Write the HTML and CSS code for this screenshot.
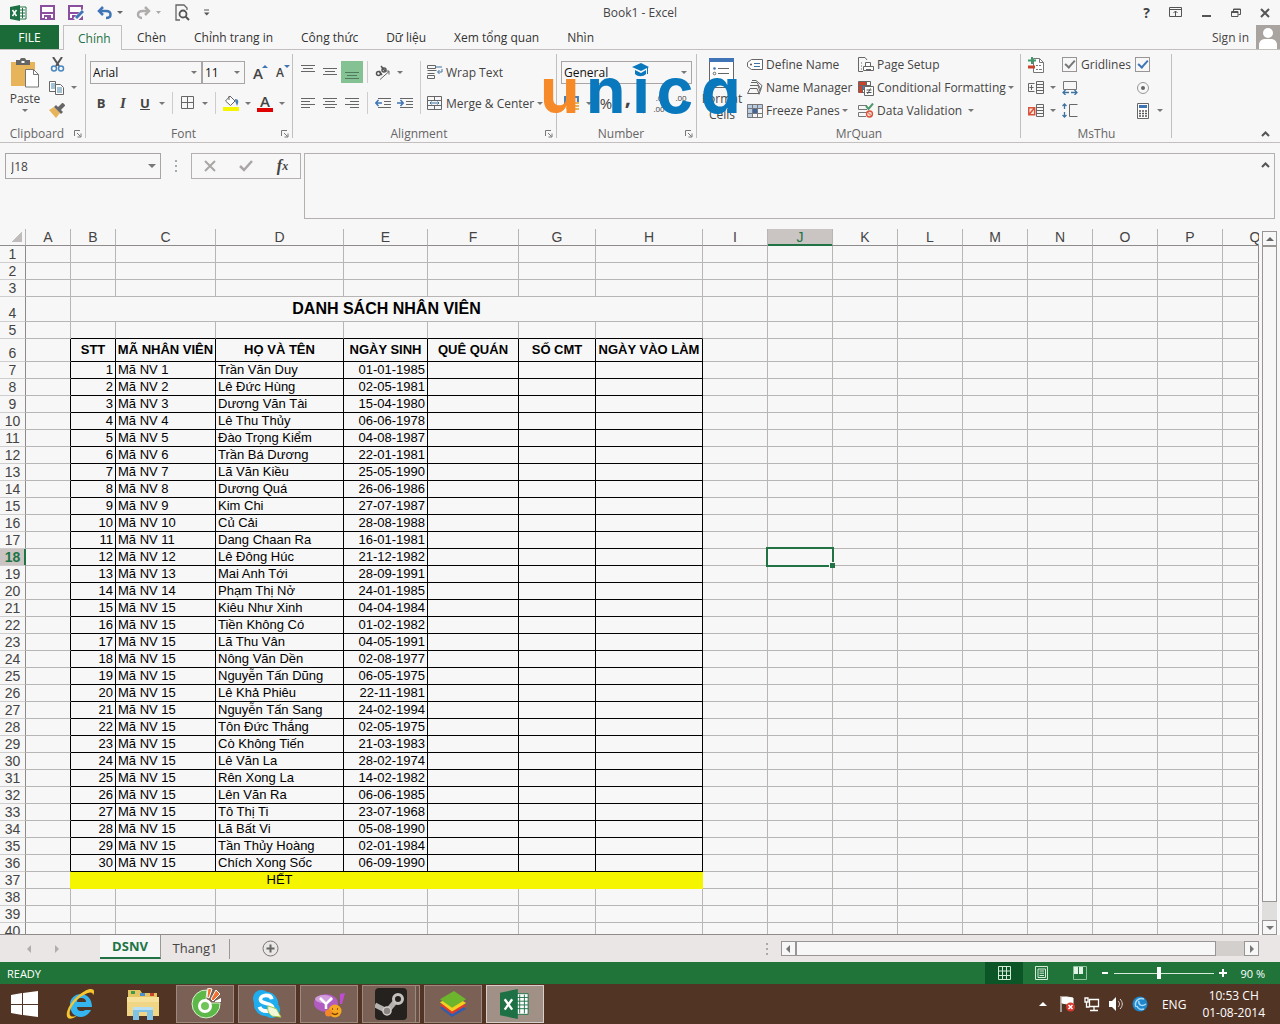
FILE: index.html
```html
<!DOCTYPE html>
<html lang="vi">
<head>
  <meta charset="UTF-8">
  <meta name="viewport" content="width=device-width, initial-scale=1.0">
  <title>Book1 - Excel</title>
  <link rel="stylesheet" href="styles.css">
</head>
<body>
  <header class="titlebar">
    <div class="quick-access">
      <svg width="17" height="16" viewBox="0 0 17 16"><path d="M9 2h7v12H9z" fill="#fff" stroke="#1e7145"/><path d="M10 5h5M10 8h5M10 11h5M12.5 3v10" stroke="#1e7145"/><path d="M0 2l10-2v16L0 14z" fill="#1e7145"/><path d="M2.500 5l4 6M6.500 5l-4 6" stroke="#fff" stroke-width="1.500"/></svg>
      <button class="icon-btn" aria-label="Save"><svg width="15" height="15" viewBox="0 0 15 15"><path d="M1 1h13v13H1z" fill="#fff" stroke="#8a4f9e" stroke-width="2"/><path d="M2 8h11" stroke="#8a4f9e" stroke-width="2"/><path d="M4 10h7v4H4z" fill="#8a4f9e"/><path d="M5 12h2v2H5z" fill="#fff"/></svg></button>
      <button class="icon-btn" aria-label="Save As"><svg width="16" height="15" viewBox="0 0 16 15"><path d="M1 1h13v13H1z" fill="#fff" stroke="#8a4f9e" stroke-width="2"/><path d="M2 8h11" stroke="#8a4f9e" stroke-width="2"/><path d="M4 10h5v4H4z" fill="#8a4f9e"/><path d="M16 6l-9 9" stroke="#f8f7f7" stroke-width="5"/><path d="M15 6l-7 7" stroke="#3f74b7" stroke-width="3"/></svg></button>
      <button class="icon-btn" aria-label="Undo"><svg width="26" height="14" viewBox="0 0 26 14"><path d="M2 5h7c6 0 6 7 0 7" fill="none" stroke="#3f74b7" stroke-width="2.500"/><path d="M6 1L2 5l4 4" fill="none" stroke="#3f74b7" stroke-width="2.500"/><path d="M20 5h6l-3 3z" fill="#666"/></svg></button>
      <button class="icon-btn" aria-label="Redo"><svg width="26" height="14" viewBox="0 0 26 14"><path d="M13 5H7c-7 0-6 7-1 7" fill="none" stroke="#b0acac" stroke-width="2.500"/><path d="M9 1l4 4-4 4" fill="none" stroke="#b0acac" stroke-width="2.500"/><path d="M20 5h5l-2.500 3z" fill="#aaa"/></svg></button>
      <button class="icon-btn" aria-label="Print Preview"><svg width="15" height="17" viewBox="0 0 15 17"><path d="M12 6V4L9 1H1v15h4" fill="none" stroke="#666" stroke-width="1.300"/><circle cx="8" cy="10" r="3.500" fill="none" stroke="#555" stroke-width="1.800"/><path d="M10.500 12.500L14 16" stroke="#555" stroke-width="2"/></svg></button>
      <button class="icon-btn" aria-label="Customize"><svg width="7" height="7" viewBox="0 0 7 7"><path d="M1 1h5" stroke="#555"/><path d="M1 3.500h5.500L3.700 6.500z" fill="#555"/></svg></button>
    </div>
    <h1 class="window-title">Book1 - Excel</h1>
    <div class="window-buttons">
      <button class="icon-btn help" aria-label="Help">?</button>
      <button class="icon-btn" aria-label="Ribbon Options"><svg width="14" height="11" viewBox="0 0 14 11"><path d="M.5.5h12v9H.5zM1 2.500h11M6.500 9V4M4.500 6l2-2 2 2" fill="none" stroke="#555"/></svg></button>
      <button class="icon-btn" aria-label="Minimize"><svg width="10" height="10" viewBox="0 0 10 10"><path d="M0 8h9" stroke="#555" stroke-width="2"/></svg></button>
      <button class="icon-btn" aria-label="Restore"><svg width="10" height="10" viewBox="0 0 10 10"><path d="M.5 3.500h6.500v5H.5zM.5 4.500h6.500M2.500 3V1h7v5.500H7.500M2.500 1.500h7" fill="none" stroke="#555"/></svg></button>
      <button class="icon-btn" aria-label="Close"><svg width="10" height="10" viewBox="0 0 10 10"><path d="M1 1l8 8M9 1L1 9" stroke="#555" stroke-width="2"/></svg></button>
    </div>
  </header>

  <nav class="tabs">
    <button class="tab tab-file">FILE</button>
    <button class="tab active">Chính</button>
    <button class="tab">Chèn</button>
    <button class="tab">Chỉnh trang in</button>
    <button class="tab">Công thức</button>
    <button class="tab">Dữ liệu</button>
    <button class="tab">Xem tổng quan</button>
    <button class="tab">Nhìn</button>
    <a class="sign-in" href="#">Sign in
      <svg width="24" height="24" viewBox="0 0 24 24"><path d="M0 0h24v24H0z" fill="#a9a4a0"/><circle cx="12" cy="8" r="5" fill="#fff"/><path d="M3 24v-4c0-4 3-6 6-6h6c3 0 6 2 6 6v4z" fill="#fff"/></svg>
    </a>
  </nav>

  <section class="ribbon">
    <div class="group group-clipboard">
      <div class="group-body">
        <button class="big-btn">
          <svg width="29" height="31" viewBox="0 0 29 31"><path d="M0 4h24v24H0z" fill="#e8b45a"/><path d="M5 2h4c0-3 6-3 6 0h4v5H5z" fill="#666"/><path d="M10.500 3h3v2h-3z" fill="#fff"/><path d="M14.500 11.500h8l5 5v12.500h-13z" fill="#fff" stroke="#777"/><path d="M22.500 11.500v5h5" fill="none" stroke="#777"/></svg>
          <span>Paste</span>
          <i class="caret"></i>
        </button>
        <div class="stack three">
          <div class="row"><button class="tool" aria-label="Cut"><svg width="15" height="15" viewBox="0 0 15 15"><path d="M3 0l6 9M12 0L6 9" stroke="#555" stroke-width="2"/><circle cx="4" cy="11.500" r="2.500" fill="none" stroke="#4a87c0" stroke-width="1.500"/><circle cx="11" cy="11.500" r="2.500" fill="none" stroke="#4a87c0" stroke-width="1.500"/></svg></button></div>
          <div class="row"><button class="tool" aria-label="Copy"><svg width="16" height="14" viewBox="0 0 16 14"><path d="M.5.500h6v10h-6z" fill="#fff" stroke="#666"/><path d="M2 3h4M2 5h4M2 7h4" stroke="#4a87a8"/><path d="M6.500 3.500h5l3 3v7h-8z" fill="#fff" stroke="#666"/><path d="M8 7h5M8 9h5M8 11h5" stroke="#4a87a8"/></svg></button><i class="caret"></i></div>
          <div class="row"><button class="tool" aria-label="Format Painter"><svg width="16" height="15" viewBox="0 0 16 15"><path d="M0 7l5-3 6 6-4 5z" fill="#e8b45a"/><path d="M5 4l7 7 2-2-7-7z" fill="#666"/><path d="M10 6l5-5" stroke="#666" stroke-width="4"/></svg></button></div>
        </div>
      </div>
      <div class="group-label">Clipboard<svg class="launcher" width="8" height="8" viewBox="0 0 8 8"><path d="M.5 6V.5H6M3 3l3.500 3.500M7 3.500V7H3.500" fill="none" stroke="#777"/></svg></div>
    </div>

    <div class="group group-font">
      <div class="group-body">
        <div class="stack two">
          <div class="row">
            <div class="combo combo-font"><select aria-label="Font"><option>Arial</option></select></div>
            <div class="combo combo-size"><select aria-label="Font size"><option>11</option></select></div>
            <button class="tool grow-font" aria-label="Increase font">A<i class="tri-up"></i></button>
            <button class="tool shrink-font" aria-label="Decrease font">A<i class="tri-down"></i></button>
          </div>
          <div class="row">
            <button class="tool"><b>B</b></button>
            <button class="tool"><b class="italic">I</b></button>
            <button class="tool"><b class="underline">U</b></button><i class="caret"></i>
            <i class="sep"></i>
            <button class="tool" aria-label="Borders"><svg width="14" height="14" viewBox="0 0 14 14"><path d="M.5.500h12v12H.5zM6.500.500v12M.5 6.500h12" fill="none" stroke="#666"/></svg></button><i class="caret"></i>
            <i class="sep"></i>
            <button class="tool" aria-label="Fill color"><svg width="17" height="16" viewBox="0 0 17 16"><path d="M7 1l5 5-4.500 4.500-5-4.500z" fill="#fff" stroke="#666"/><path d="M6 5V1" stroke="#666"/><path d="M12 4c4 0 4 3 2 7-1-3-2-4-2-7z" fill="#4a80b8"/><path d="M0 12h16v4H0z" fill="#f5f500"/></svg></button><i class="caret"></i>
            <button class="tool font-color" aria-label="Font color">A</button><i class="caret"></i>
          </div>
        </div>
      </div>
      <div class="group-label">Font<svg class="launcher" width="8" height="8" viewBox="0 0 8 8"><path d="M.5 6V.5H6M3 3l3.500 3.500M7 3.500V7H3.500" fill="none" stroke="#777"/></svg></div>
    </div>

    <div class="group group-align">
      <div class="group-body">
        <div class="stack two align-left">
          <div class="row">
            <button class="tool" aria-label="Top Align"><svg width="14" height="14" viewBox="0 0 14 14"><path d="M0 .5h14M2 3.500h10M0 6.500h14" stroke="#666"/></svg></button>
            <button class="tool" aria-label="Middle Align"><svg width="14" height="14" viewBox="0 0 14 14"><path d="M0 3.500h14M2 6.500h10M0 9.500h14" stroke="#666"/></svg></button>
            <button class="tool pressed" aria-label="Bottom Align"><svg width="14" height="14" viewBox="0 0 14 14"><path d="M0 7.500h14M2 10.500h10M0 13.500h14" stroke="#4f7a5d"/></svg></button>
            <i class="sep"></i>
            <button class="tool" aria-label="Orientation"><svg width="16" height="15" viewBox="0 0 16 15"><g fill="none" stroke="#555" stroke-width="1.500"><circle cx="3.500" cy="8.500" r="2"/><path d="M4 6l3 4M6 1l4 5"/><circle cx="9" cy="5" r="2"/></g><path d="M5 14.500l9-8M10.500 6H14v3.500" stroke="#666" fill="none"/></svg></button><i class="caret"></i>
          </div>
          <div class="row">
            <button class="tool" aria-label="Align Left"><svg width="14" height="12" viewBox="0 0 14 12"><path d="M0 1.500h14M0 4.500h9M0 7.500h14M0 10.500h9" stroke="#666"/></svg></button>
            <button class="tool" aria-label="Center"><svg width="14" height="12" viewBox="0 0 14 12"><path d="M0 1.500h14M2 4.500h10M0 7.500h14M2 10.500h10" stroke="#666"/></svg></button>
            <button class="tool" aria-label="Align Right"><svg width="14" height="12" viewBox="0 0 14 12"><path d="M0 1.500h14M5 4.500h9M0 7.500h14M5 10.500h9" stroke="#666"/></svg></button>
            <i class="sep"></i>
            <button class="tool" aria-label="Decrease Indent"><svg width="16" height="12" viewBox="0 0 16 12"><path d="M3 1.500h13M9 4.500h7M9 7.500h7M3 10.500h13" stroke="#666"/><path d="M1 6h6M3.500 3L.8 6l2.700 3" fill="none" stroke="#3f74b7" stroke-width="1.500"/></svg></button>
            <button class="tool" aria-label="Increase Indent"><svg width="16" height="12" viewBox="0 0 16 12"><path d="M3 1.500h13M9 4.500h7M9 7.500h7M3 10.500h13" stroke="#666"/><path d="M0 6h6M3.500 3l2.700 3-2.700 3" fill="none" stroke="#3f74b7" stroke-width="1.500"/></svg></button>
          </div>
        </div>
        <div class="stack two align-right">
          <div class="row"><button class="cmd"><svg width="16" height="16" viewBox="0 0 16 16"><path d="M.5 1.500h8v3h-8zM.5 6.500h9M.5 9.500h7M.5 11.500h7v3h-7z" fill="none" stroke="#666"/><path d="M8 3h7M15 5v3h-4M12.500 6l-2 2 2 2" fill="none" stroke="#3f74a0"/></svg>Wrap Text</button></div>
          <div class="row"><button class="cmd"><svg width="16" height="16" viewBox="0 0 16 16"><path d="M.5 1.500h14v13H.5zM.5 5.500h14M.5 10.500h14M7.500 1.500v4M7.500 10.500v4" fill="none" stroke="#666"/><path d="M3 8h9M4.500 6.500L3 8l1.500 1.500M10.500 6.500L12 8l-1.500 1.500" fill="none" stroke="#3f74a0"/></svg>Merge &amp; Center</button><i class="caret"></i></div>
        </div>
      </div>
      <div class="group-label">Alignment<svg class="launcher" width="8" height="8" viewBox="0 0 8 8"><path d="M.5 6V.5H6M3 3l3.500 3.500M7 3.500V7H3.500" fill="none" stroke="#777"/></svg></div>
    </div>

    <div class="group group-number">
      <div class="group-body">
        <div class="stack two">
          <div class="row"><div class="combo combo-format"><select aria-label="Number format"><option>General</option></select></div></div>
          <div class="row">
            <button class="tool" aria-label="Accounting format"><svg width="16" height="16" viewBox="0 0 16 16"><path d="M0 1h15v8H0z" fill="#4a80b8"/><path d="M2 3h11v4H2z" fill="#dfe9f3"/><path d="M7 7h8v2H7zM7 10h8v2H7zM7 13h8v2H7zM2 12h4v2H2z" fill="#e8b45a"/></svg></button><i class="caret"></i>
            <button class="tool percent">%</button>
            <button class="tool comma">,</button>
            <i class="sep"></i>
            <button class="tool decimals"><span>.0</span><span>.00</span></button>
            <button class="tool decimals"><span>.00</span><span>.0</span></button>
          </div>
        </div>
        <div class="unica" role="img" aria-label="unica">
          <span class="orange">u</span><span>n</span><span class="unica-i">ı<svg width="18" height="14" viewBox="0 0 18 14"><path d="M0 4l9-4 8 4-8 4z" fill="#0a78bd"/><path d="M3 7l6 3 5-3v4c-3 3-8 3-11 0z" fill="#0a78bd"/><path d="M15.500 4v7" stroke="#0a78bd"/></svg></span><span>c</span><span>a</span>
        </div>
      </div>
      <div class="group-label">Number<svg class="launcher" width="8" height="8" viewBox="0 0 8 8"><path d="M.5 6V.5H6M3 3l3.500 3.500M7 3.500V7H3.500" fill="none" stroke="#777"/></svg></div>
    </div>

    <div class="group group-mrquan">
      <div class="group-body">
        <button class="big-btn">
          <svg width="26" height="31" viewBox="0 0 26 31"><path d="M.5.500h24v29H.5z" fill="#fff" stroke="#666"/><path d="M0 0h25v4H0z" fill="#3f74b7"/><path d="M9 10.500h11M9 15.500h11" stroke="#666"/><circle cx="5.500" cy="10.500" r="1.300" fill="#3f74b7"/><circle cx="5.500" cy="15.500" r="1.300" fill="none" stroke="#666"/></svg>
          <span>Format<br>Cells</span>
        </button>
        <div class="stack three names">
          <div class="row"><button class="cmd"><svg width="16" height="12" viewBox="0 0 16 12"><path d="M4.500.500h11v10h-11L.5 7.500v-4z" fill="#fff" stroke="#666"/><circle cx="4" cy="5.500" r="1" fill="#555"/><path d="M7 4.500h6M7 7.500h6" stroke="#3f74a0"/></svg>Define Name</button></div>
          <div class="row"><button class="cmd"><svg width="16" height="15" viewBox="0 0 16 15"><path d="M3 8.500h7l2 5H.5zM3 5.500h8l2 6M4 2.500h6l4 7M5 .5h4l6 5-3 9" fill="none" stroke="#666"/></svg>Name Manager</button></div>
          <div class="row"><button class="cmd"><svg width="16" height="14" viewBox="0 0 16 14"><path d="M0 0h16v5H5v9H0z" fill="#b9cce2"/><path d="M6 5h5v4H6z" fill="#3f62a0"/><path d="M.5.500h15v13H.5zM.5 4.500h15M.5 9.500h15M5.500.500v13M10.500.500v13" fill="none" stroke="#777"/></svg>Freeze Panes</button><i class="caret"></i></div>
        </div>
        <div class="stack three">
          <div class="row"><button class="cmd"><svg width="16" height="15" viewBox="0 0 16 15"><path d="M9 3L7 .5H.5v14H5M3 6h1M3 9h1M3 12h1" fill="none" stroke="#666"/><path d="M5.500 9.500h10v4h-10zM7.500 9V5.500h5V9M8 12.500h5" fill="#fff" stroke="#666"/></svg>Page Setup</button></div>
          <div class="row"><button class="cmd"><svg width="16" height="16" viewBox="0 0 16 16"><path d="M.5 1.500h12v11H.5zM.5 5.500h12M.5 9.500h12M4.500 1v11M8.500 1v11" fill="#fff" stroke="#666"/><path d="M1 2h7v3H1zM1 6h3v7H1z" fill="#c9442c"/><path d="M5 6h4v3H5z" fill="#4a80c0"/><path d="M6.500 6.500h9v9h-9z" fill="#fff" stroke="#666"/><path d="M8.500 10h5M8.500 12.500h5M12.500 8.500l-3 5.500" stroke="#555"/></svg>Conditional Formatting</button><i class="caret"></i></div>
          <div class="row"><button class="cmd"><svg width="16" height="15" viewBox="0 0 16 15"><path d="M9 2.500H.5v4H9M8 9.500H.5v4H8" fill="none" stroke="#777"/><path d="M8 3l2.500 3L15 .5" fill="none" stroke="#4a9a6b" stroke-width="2"/><circle cx="11.500" cy="11" r="3" fill="#f6d8d0" stroke="#d9533a" stroke-width="1.300"/><path d="M9.500 9l4 4" stroke="#d9533a"/></svg>Data Validation</button><i class="caret caret-far"></i></div>
        </div>
      </div>
      <div class="group-label">MrQuan</div>
    </div>

    <div class="group group-msthu">
      <div class="group-body">
        <div class="stack three">
          <div class="row"><button class="tool" aria-label="Switch"><svg width="16" height="16" viewBox="0 0 16 16"><path d="M5.500 1.500h6l4 4v10h-10z" fill="#fff" stroke="#777"/><path d="M11.500 1.500v4h4M8 8.500h2M11 8.500h2M8 12.500h2M11 12.500h3" fill="none" stroke="#777"/><path d="M4 0v7M0 3.500h8" stroke="#3f9a6b" stroke-width="2"/><path d="M0 10h7" stroke="#c9442c" stroke-width="3"/></svg></button></div>
          <div class="row"><button class="tool" aria-label="Insert"><svg width="16" height="14" viewBox="0 0 16 14"><path d="M6.500 10.500h-6v-8h6M8.500.500h7v12h-7zM8.500 3.500h7M8.500 6.500h7M8.500 9.500h7M3.500 4v5M1.500 6.500h4" fill="none" stroke="#666"/></svg></button><i class="caret"></i></div>
          <div class="row"><button class="tool" aria-label="Delete"><svg width="16" height="14" viewBox="0 0 16 14"><path d="M8.500.500h7v12h-7zM8.500 3.500h7M8.500 6.500h7M8.500 9.500h7" fill="none" stroke="#666"/><path d="M.7 3.700h6v7h-6zM1 10.500l5.500-6.500" fill="#fbe3dc" stroke="#d9533a" stroke-width="1.500"/></svg></button><i class="caret"></i></div>
        </div>
        <div class="stack three width-tools">
          <div class="row"><label class="check grey"><input type="checkbox" checked>Gridlines</label></div>
          <div class="row"><button class="tool" aria-label="Column width"><svg width="16" height="15" viewBox="0 0 16 15"><path d="M1.500 9.500v-8h13v8z" fill="none" stroke="#777"/><path d="M1 12.500h6M9 12.500h6M3.500 10L1 12.500 3.500 15M12.500 10l2.500 2.500-2.500 2.500" fill="none" stroke="#3f74a0" stroke-width="1.300"/></svg></button></div>
          <div class="row"><button class="tool" aria-label="Row height"><svg width="16" height="15" viewBox="0 0 16 15"><path d="M15.500 1.500h-8v12h8" fill="none" stroke="#666"/><path d="M2.500 1v5M2.500 9v5M.5 3l2-2 2 2M.5 12l2 2 2-2" fill="none" stroke="#3f74a0" stroke-width="1.300"/></svg></button></div>
        </div>
        <div class="stack three">
          <div class="row"><label class="check"><input type="checkbox" checked aria-label="Checkbox"></label></div>
          <div class="row"><label class="check"><input type="radio" checked aria-label="Option"></label></div>
          <div class="row"><button class="tool calc" aria-label="Calculate"><svg width="13" height="16" viewBox="0 0 13 16"><path d="M.5.500h11v15H.5z" fill="#fff" stroke="#666"/><path d="M2 2h8v3H2z" fill="#3f74b7"/><path d="M2 8h2M5 8h2M8 8h2M2 10.500h2M5 10.500h2M8 10.500h2M2 13h2M5 13h2M8 13h2" stroke="#555" stroke-width="1.500"/></svg></button><i class="caret"></i></div>
        </div>
      </div>
      <div class="group-label">MsThu</div>
    </div>
    <button class="icon-btn collapse" aria-label="Collapse the Ribbon"><svg width="9" height="6" viewBox="0 0 9 6"><path d="M1 5l3.500-3.500L8 5" fill="none" stroke="#555" stroke-width="2"/></svg></button>
  </section>

  <section class="formula-bar">
    <div class="combo combo-name"><input type="text" value="J18" aria-label="Name Box"></div>
    <svg class="dots" width="3" height="12" viewBox="0 0 3 12"><path d="M0 0h2v2H0zM0 5h2v2H0zM0 10h2v2H0z" fill="#aaa"/></svg>
    <div class="fx-buttons">
      <button class="icon-btn" aria-label="Cancel"><svg width="12" height="12" viewBox="0 0 12 12"><path d="M1 1l10 10M11 1L1 11" stroke="#aaa6a6" stroke-width="2"/></svg></button>
      <button class="icon-btn" aria-label="Enter"><svg width="14" height="12" viewBox="0 0 14 12"><path d="M1 6l4 4 8-9" fill="none" stroke="#aaa6a6" stroke-width="2.500"/></svg></button>
      <button class="icon-btn fx">f<small>x</small></button>
    </div>
    <div class="formula-input">
      <textarea aria-label="Formula"></textarea>
      <button class="icon-btn" aria-label="Collapse Formula Bar"><svg width="9" height="6" viewBox="0 0 9 6"><path d="M1 5l3.500-3.500L8 5" fill="none" stroke="#555" stroke-width="2"/></svg></button>
    </div>
  </section>

  <main class="sheet">
    <div class="grid-wrap">
      <table class="grid">
        <colgroup>
          <col class="col-head"><col class="col-a"><col class="col-b"><col class="col-c"><col class="col-d"><col class="col-e"><col class="col-f"><col class="col-g"><col class="col-h">
          <col class="col-std" span="9">
        </colgroup>
        <thead><tr id="columnHeads"></tr></thead>
        <tbody id="gridBody"></tbody>
      </table>
    </div>
    <div class="vscroll">
      <button class="scroll-btn" aria-label="Scroll up"><i class="tri-n"></i></button>
      <div class="vthumb"></div>
      <div class="vtrack"></div>
      <button class="scroll-btn" aria-label="Scroll down"><i class="tri-s"></i></button>
    </div>
  </main>

  <div class="sheet-tabs">
    <div class="sheet-nav"><i class="tri-w"></i><i class="tri-e"></i></div>
    <button class="sheet-tab active">DSNV</button>
    <button class="sheet-tab">Thang1</button>
    <button class="icon-btn new-sheet" aria-label="New sheet"><svg width="17" height="17" viewBox="0 0 17 17"><circle cx="8.500" cy="8.500" r="7.500" fill="none" stroke="#777"/><path d="M8.500 4.500v8M4.500 8.500h8" stroke="#666" stroke-width="2"/></svg></button>
    <svg class="dots" width="3" height="12" viewBox="0 0 3 12"><path d="M0 0h2v2H0zM0 5h2v2H0zM0 10h2v2H0z" fill="#aaa"/></svg>
    <div class="hscroll">
      <button class="scroll-btn" aria-label="Scroll left"><i class="tri-w"></i></button>
      <div class="hthumb"></div>
      <div class="htrack"></div>
      <button class="scroll-btn" aria-label="Scroll right"><i class="tri-e"></i></button>
    </div>
  </div>

  <footer class="status-bar">
    <span class="ready">READY</span>
    <button class="view-btn active" aria-label="Normal"><svg width="13" height="15" viewBox="0 0 13 15"><path d="M.5.500h12v13H.5zM.5 5h12M.5 9.500h12M4.500.500v13M8.500.500v13" fill="none" stroke="#d5ead9"/></svg></button>
    <button class="view-btn" aria-label="Page Layout"><svg width="14" height="15" viewBox="0 0 14 15"><path d="M.5.500h12v13H.5zM3 3h7.500v8.500H3zM4.500 5h4.500M4.500 7.200h4.500M4.500 9.500h4.500" fill="none" stroke="#d5ead9"/></svg></button>
    <button class="view-btn" aria-label="Page Break Preview"><svg width="14" height="15" viewBox="0 0 14 15"><path d="M.5.500h13v13H.5z" fill="none" stroke="#8fc29d"/><path d="M1 1h4v7H1zM6 1h4v7H6z" fill="#e3f2e6"/></svg></button>
    <button class="icon-btn zoom" aria-label="Zoom out"><svg width="8" height="8" viewBox="0 0 8 8"><path d="M1 4h6" stroke="#fff" stroke-width="2"/></svg></button>
    <input class="zoom-slider" type="range" min="0" max="100" value="45" aria-label="Zoom">
    <button class="icon-btn zoom" aria-label="Zoom in"><svg width="8" height="8" viewBox="0 0 8 8"><path d="M0 4h8M4 0v8" stroke="#fff" stroke-width="2"/></svg></button>
    <span class="zoom-value">90 %</span>
  </footer>

  <div class="taskbar">
    <button class="start" aria-label="Start"><svg width="27" height="26" viewBox="0 0 27 26"><path d="M0 4l11-2v11H0zM12 2l15-2v13H12zM0 14h11v10L0 22zM12 14h15v12l-15-2z" fill="#fff"/></svg></button>
    <button class="launch" aria-label="Internet Explorer"><svg width="32" height="32" viewBox="0 0 32 32"><path d="M26 22c-2 4-6 7-10 7-7 0-11-5-11-12S10 6 16 6s11 5 11 13H12c0 3 2 4 4 4s3 0 4-1zM12 14h9c0-3-2-4-5-4s-4 2-4 4z" fill="#35b5f0"/><path d="M3 30C-1 26 5 14 14 7S28 0 29 3c0 2 0 3-1 4 0-3-3-4-11 1S3 23 5 27c1 2 4 2 8 0-4 3-8 5-10 3z" fill="#f6c630"/></svg></button>
    <button class="launch" aria-label="File Explorer"><svg width="34" height="32" viewBox="0 0 34 32"><path d="M2 2h12l2 3h15v22H2z" fill="#e5c463"/><path d="M5 3h4v3H5z" fill="#3f9a50"/><path d="M14 5h5v3h-5z" fill="#4a90d0"/><path d="M24 5h4v3h-4z" fill="#c9442c"/><path d="M1 9h32v19H1z" fill="#f6e19a"/><path d="M1 14h32v14H1z" fill="#f0d684"/><path d="M7 19h20v13h-6v-8h-8v8H7z" fill="#7fc2e6"/><path d="M7 19h20v3H7z" fill="#b9e0f3"/></svg></button>
    <button class="app" aria-label="Coc Coc"><svg width="32" height="32" viewBox="0 0 32 32"><path d="M18 2a14 14 0 1 0 13 13H20l-3-4z" fill="#5cb847" stroke="#d9f0d2"/><circle cx="16" cy="18" r="5.500" fill="#6fc55a" stroke="#fff" stroke-width="3"/><path d="M18 9l1-9 4 1-3 9zM22 11l5-9 4 4-7 7z" fill="#f07030" stroke="#fff"/><path d="M26 13l6-3v4h-6z" fill="#fff"/></svg></button>
    <button class="app" aria-label="Skype"><svg width="30" height="30" viewBox="0 0 32 32"><circle cx="10" cy="10" r="9" fill="#1eaef0"/><circle cx="15" cy="16" r="13" fill="#1eaef0"/><circle cx="21" cy="22" r="9" fill="#1eaef0"/><path d="M21 11c-1-6-12-5-12 0 0 6 13 3 13 9 0 5-12 5-14-1" fill="none" stroke="#fff" stroke-width="4"/><path d="M17 18l9 3 5 9-9-1c-4-2-6-6-5-11z" fill="#f3f9d8" stroke="#9bc23c"/></svg></button>
    <button class="app" aria-label="Yahoo Messenger"><svg width="32" height="32" viewBox="0 0 32 32"><ellipse cx="13" cy="15" rx="12" ry="9" fill="#b05cc0"/><ellipse cx="11" cy="11" rx="9" ry="4" fill="#d29bdc"/><path d="M7 10l6 6 6-6M13 16v5" fill="none" stroke="#fff" stroke-width="2.500"/><path d="M27 6l5-1-3 11h-2z" fill="#c04cd4"/><circle cx="22" cy="23" r="6.500" fill="#f6a822"/><circle cx="15.500" cy="25" r="3.500" fill="#f3872a"/><path d="M19 21h1M24 21h1M19 25c2 2 4 2 6 0" stroke="#7a3e00" stroke-width="1.500" fill="none"/></svg></button>
    <button class="app stacked" aria-label="Steam"><svg width="32" height="32" viewBox="0 0 32 32"><rect width="32" height="32" rx="4" fill="#25211f"/><path d="M0 17l12 6M14 21l6-7" stroke="#b5b1af" stroke-width="5" fill="none"/><circle cx="23" cy="11" r="4.500" fill="#25211f" stroke="#c5c1bf" stroke-width="3"/><circle cx="12" cy="23" r="4" fill="#8a8583" stroke="#d0cccb" stroke-width="1.500"/></svg></button>
    <button class="app" aria-label="BlueStacks"><svg width="30" height="28" viewBox="0 0 32 30"><path d="M2 19l15-7 13 8-15 9z" fill="#2b5fb0"/><path d="M2 16l15-7 13 8-15 9z" fill="#e03a2e"/><path d="M2 13l15-7 13 8-15 9z" fill="#f6d020"/><path d="M2 10L17 1l13 9-15 9z" fill="#6cb52d"/></svg></button>
    <button class="app current" aria-label="Excel"><svg width="30" height="30" viewBox="0 0 32 32"><path d="M17 5h13v22H17z" fill="#fff" stroke="#1e7145"/><path d="M18 9h12M18 13h12M18 17h12M18 21h12M21 6v20M26 6v20" stroke="#1e7145"/><path d="M0 4l19-4v32L0 28z" fill="#1e7145"/><path d="M5 11l8 11M13 11L5 22" stroke="#fff" stroke-width="2.500"/></svg></button>
    <div class="tray">
      <i class="tri-n light"></i>
      <svg width="16" height="18" viewBox="0 0 16 18"><path d="M1 1v16M2 2h5l6 1v6H7L2 8z" fill="#fff" stroke="#fff"/><circle cx="10.500" cy="12" r="4.500" fill="#d83a2e"/><path d="M8.500 10l4 4M12.500 10l-4 4" stroke="#fff" stroke-width="1.500"/></svg>
      <svg width="16" height="16" viewBox="0 0 16 16"><path d="M5.500 3.500h9v7h-9zM10 11v3M6 14.500h8M1 2h3v4H1zM2.500 6v5h3" fill="none" stroke="#fff" stroke-width="1.300"/></svg>
      <svg width="16" height="16" viewBox="0 0 16 16"><path d="M1 5h3l4-4v14l-4-4H1z" fill="#fff"/><path d="M10 5c2 2 2 4 0 6M12 3c3 3 3 7 0 10" fill="none" stroke="#e0d8d4"/></svg>
      <svg width="16" height="16" viewBox="0 0 16 16"><circle cx="8" cy="8" r="7.500" fill="#2086cc"/><path d="M12 3C6 1 2 6 4 11M14 8c-4 3-8 1-7-3M12 13c-3 1-6 0-7-3" fill="none" stroke="#a5dbf7" stroke-width="1.500"/></svg>
      <span>ENG</span>
      <time class="clock">10:53 CH<br>01-08-2014</time>
    </div>
  </div>

  <script>
    const people = [
      ["Trần Văn Duy", "01-01-1985"], ["Lê Đức Hùng", "02-05-1981"], ["Dương Văn Tài", "15-04-1980"],
      ["Lê Thu Thủy", "06-06-1978"], ["Đào Trọng Kiểm", "04-08-1987"], ["Trần Bá Dương", "22-01-1981"],
      ["Lã Văn Kiều", "25-05-1990"], ["Dương Quá", "26-06-1986"], ["Kim Chi", "27-07-1987"],
      ["Củ Cải", "28-08-1988"], ["Dang Chaan Ra", "16-01-1981"], ["Lê Đông Húc", "21-12-1982"],
      ["Mai Anh Tới", "28-09-1991"], ["Phạm Thị Nở", "24-01-1985"], ["Kiêu Như Xinh", "04-04-1984"],
      ["Tiền Không Có", "01-02-1982"], ["Lã Thu Vân", "04-05-1991"], ["Nông Văn Dền", "02-08-1977"],
      ["Nguyễn Tấn Dũng", "06-05-1975"], ["Lê Khả Phiêu", "22-11-1981"], ["Nguyễn Tấn Sang", "24-02-1994"],
      ["Tôn Đức Thắng", "02-05-1975"], ["Cò Không Tiến", "21-03-1983"], ["Lê Văn La", "28-02-1974"],
      ["Rên Xong La", "14-02-1982"], ["Lên Văn Ra", "06-06-1985"], ["Tô Thị Ti", "23-07-1968"],
      ["Lã Bất Vi", "05-08-1990"], ["Tần Thủy Hoàng", "02-01-1984"], ["Chích Xong Sốc", "06-09-1990"]
    ];
    const letters = "ABCDEFGHIJKLMNOPQ".split("");
    const titles = ["STT", "MÃ NHÂN VIÊN", "HỌ VÀ TÊN", "NGÀY SINH", "QUÊ QUÁN", "SỐ CMT", "NGÀY VÀO LÀM"];

    document.getElementById("columnHeads").innerHTML = `<th class="corner"></th>` +
      letters.map(l => `<th class="${l === "J" ? "selected" : ""}">${l}</th>`).join("");

    function cell(row, col) {
      const inTable = col >= 1 && col <= 7;
      if (row === 5 && inTable) return `<td class="ink-bottom"></td>`;
      if (row === 6 && inTable) return `<td class="ink head">${titles[col - 1]}</td>`;
      if (row >= 6 && row <= 36 && col === 0) return `<td class="ink-right"></td>`;
      if (row === 37 && col === 0) return `<td class="yellow-right"></td>`;
      if (row === 37 && inTable) return `<td class="yellow">${col === 3 ? "HẾT" : ""}</td>`;
      if (row >= 7 && row <= 36 && inTable) {
        const n = row - 6;
        const person = people[n - 1];
        const values = [n, "Mã NV " + Math.min(n, 15), person[0], person[1], "", "", ""];
        return `<td class="ink ${col === 1 || col === 4 ? "right" : ""}">${values[col - 1]}</td>`;
      }
      if (row === 18 && col === 9) return `<td class="cursor"></td>`;
      return `<td></td>`;
    }

    let html = "";
    for (let row = 1; row <= 40; row++) {
      html += `<tr class="row-${row}"><th class="${row === 18 ? "selected" : ""}">${row}</th>`;
      for (let col = 0; col < letters.length; col++) {
        if (row === 4 && col === 1) {
          html += `<td class="list-title" colspan="7">DANH SÁCH NHÂN VIÊN</td>`;
          col = 7;
        } else {
          html += cell(row, col);
        }
      }
      html += `</tr>`;
    }
    document.getElementById("gridBody").innerHTML = html;
  </script>
</body>
</html>
```
FILE: styles.css
```css
* {
  box-sizing: border-box;
}

body {
  margin: 0;
  height: 100vh;
  display: flex;
  flex-direction: column;
  overflow: hidden;
  background: #f8f7f7;
  color: #444;
  font-family: "Open Sans", "Noto Sans", sans-serif;
  font-size: 12px;
}

button,
input,
select,
textarea {
  margin: 0;
  padding: 0;
  border: 0;
  border-radius: 0;
  background: none;
  color: inherit;
  font: inherit;
}

svg {
  display: block;
  flex: none;
}

.icon-btn {
  display: flex;
  align-items: center;
  justify-content: center;
}

/* title bar */
.titlebar {
  display: grid;
  grid-template-columns: 1fr auto 1fr;
  align-items: center;
  height: 25px;
  padding: 0 10px;
  flex: none;
}

.quick-access {
  display: flex;
  align-items: center;
  gap: 13px;
}

.window-title {
  margin: 0;
  font-size: 12px;
  font-weight: 400;
}

.window-buttons {
  display: flex;
  justify-content: flex-end;
  align-items: center;
  gap: 19px;
}

.help {
  font-size: 14px;
  font-weight: 700;
}

/* ribbon tabs */
.tabs {
  display: flex;
  height: 25px;
  flex: none;
  border-bottom: 1px solid #c3bfbf;
}

.tab {
  padding: 0 14px;
  color: #333;
}

.tab-file {
  width: 59px;
  margin-right: 4px;
  background: #1a6b38;
  color: #fff;
}

.tab.active {
  width: 59px;
  height: 25px;
  margin-right: 1px;
  border: 1px solid #c3bfbf;
  border-bottom: 0;
  background: #f8f7f7;
  color: #217346;
}

.sign-in {
  display: flex;
  align-items: center;
  gap: 7px;
  margin-left: auto;
  color: inherit;
  text-decoration: none;
}

/* ribbon */
.ribbon {
  display: flex;
  height: 93px;
  flex: none;
  border-bottom: 1px solid #c3bfbf;
}

.group {
  display: flex;
  flex-direction: column;
  padding-left: 4px;
  background: linear-gradient(#c3bfbf, #c3bfbf) right 4px / 1px 84px no-repeat;
}

.group-body {
  display: flex;
  height: 74px;
  position: relative;
}

.group-label {
  display: flex;
  align-items: center;
  justify-content: center;
  height: 18px;
  padding-right: 16px;
  position: relative;
  color: #666;
}

.launcher {
  position: absolute;
  right: 4px;
  bottom: 4px;
}

.group-clipboard {
  width: 86px;
}

.group-font {
  width: 207px;
}

.group-align {
  width: 264px;
}

.group-number {
  width: 140px;
}

.group-mrquan {
  width: 324px;
}

.group-msthu {
  width: 151px;
}

.group-mrquan .group-label,
.group-msthu .group-label {
  padding-right: 4px;
}

.stack {
  display: grid;
  align-content: start;
}

.stack.two {
  grid-auto-rows: 22px;
  gap: 9px;
  padding-top: 11px;
}

.stack.three {
  grid-auto-rows: 23px;
  padding-top: 3px;
}

.row {
  display: flex;
  align-items: center;
}

.tool {
  display: flex;
  align-items: center;
  justify-content: center;
  width: 22px;
  height: 22px;
  font-size: 13px;
}

.pressed {
  background: #84c294;
}

.cmd {
  display: flex;
  align-items: center;
  gap: 3px;
  white-space: nowrap;
}

.caret {
  width: 12px;
  display: flex;
  justify-content: center;
}

.caret::after,
.combo::after {
  content: "";
  border: 3px solid transparent;
  border-top-color: #777;
  border-bottom: 0;
}

.sep {
  width: 1px;
  height: 22px;
  margin: 0 4px;
  background: #d0cccc;
}

.big-btn {
  display: flex;
  flex-direction: column;
  align-items: center;
  gap: 2px;
  width: 42px;
  padding-top: 8px;
  line-height: 16px;
}

.combo {
  display: flex;
  align-items: center;
  height: 23px;
  position: relative;
  border: 1px solid #aaa5a5;
}

.combo::after {
  position: absolute;
  right: 4px;
}

.combo select,
.combo input {
  width: 100%;
  padding-left: 2px;
  appearance: none;
  color: #111;
}

.combo-font {
  width: 112px;
}

.combo-size {
  width: 43px;
  margin-right: 2px;
}

.combo-format {
  width: 131px;
}

.grow-font,
.shrink-font {
  align-items: flex-end;
  position: relative;
  font-weight: 600;
  line-height: 20px;
}

.grow-font {
  font-size: 15px;
}

.shrink-font {
  font-size: 12px;
}

.tri-up,
.tri-down {
  position: absolute;
  top: 4px;
  right: 1px;
  border: 3px solid transparent;
}

.tri-up {
  border-bottom-color: #3f74b7;
  border-top: 0;
}

.tri-down {
  border-top-color: #3f74b7;
  border-bottom: 0;
}

.italic {
  font-family: "Liberation Serif", serif;
  font-style: italic;
  font-size: 15px;
}

.underline {
  text-decoration: underline;
}

.font-color {
  width: 16px;
  height: 17px;
  margin: 0 3px;
  border-bottom: 4px solid #e00000;
  font-size: 15px;
  font-weight: 600;
}

.align-left {
  width: 123px;
}

.align-right {
  position: relative;
  padding-left: 7px;
  background: linear-gradient(#d0cccc, #d0cccc) left 11px / 1px 53px no-repeat;
}

.percent {
  font-size: 15px;
}

.comma {
  padding-bottom: 14px;
  font-size: 22px;
  font-weight: 700;
  line-height: 8px;
}

.decimals {
  flex-direction: column;
  font-size: 8px;
  line-height: 11px;
}

/* brand mark lying over the number group */
.unica {
  position: absolute;
  left: -21px;
  top: 9px;
  z-index: 2;
  display: flex;
  gap: 7px;
  color: #0a78bd;
  font-family: Inter, sans-serif;
  font-feature-settings: "cv11";
  font-size: 63px;
  font-weight: 700;
  line-height: 62px;
}

.orange {
  color: #f68a29;
}

.unica-i {
  position: relative;
}

.unica-i svg {
  position: absolute;
  left: 0;
  top: 4px;
}

.names {
  width: 111px;
  margin-left: 4px;
}

.group-mrquan .caret {
  width: 10px;
}

.caret-far {
  margin-left: 4px;
}

.width-tools {
  width: 73px;
}

.check {
  display: flex;
  align-items: center;
  gap: 5px;
  padding-left: 4px;
}

.check input {
  appearance: none;
  display: grid;
  place-items: center;
  width: 13px;
  height: 13px;
  outline: 1px solid #9a9595;
  color: #3f74b7;
}

.check input[type="checkbox"]::after {
  content: "";
  width: 8px;
  height: 4px;
  margin-bottom: 3px;
  border: solid currentColor;
  border-width: 0 0 2px 2px;
  rotate: -48deg;
}

.check.grey input {
  color: #777;
}

.check input[type="radio"] {
  width: 10px;
  height: 10px;
  margin-left: 2px;
  border-radius: 50%;
}

.check input[type="radio"]::after {
  content: "";
  width: 4px;
  height: 4px;
  border-radius: 50%;
  background: #666;
}

.collapse {
  align-self: flex-end;
  margin: 0 10px 5px auto;
}

/* formula bar */
.formula-bar {
  display: flex;
  align-items: flex-start;
  height: 86px;
  flex: none;
  padding: 10px 5px 9px;
}

.combo-name {
  width: 156px;
  height: 26px;
}

.combo-name input {
  padding-left: 5px;
  color: #444;
}

.combo-name::after {
  border-width: 4px 4px 0;
}

.formula-bar .dots {
  margin: 7px 13px 0 14px;
}

.fx-buttons {
  display: flex;
  align-items: center;
  justify-content: space-around;
  width: 110px;
  height: 26px;
  margin-right: 3px;
  border: 1px solid #b5b0b0;
}

.fx {
  font-family: "Liberation Serif", serif;
  font-size: 16px;
  font-style: italic;
  font-weight: 700;
}

.fx small {
  font-size: 12px;
}

.formula-input {
  display: flex;
  align-items: flex-start;
  flex: 1;
  height: 66px;
  padding: 8px 4px 0 4px;
  border: 1px solid #b5b0b0;
}

.formula-input textarea {
  flex: 1;
  resize: none;
}

/* worksheet */
.sheet {
  display: flex;
  flex: 1;
  min-height: 0;
  padding-right: 3px;
}

.grid-wrap {
  flex: 1;
  min-width: 0;
  overflow: hidden;
  border-bottom: 1px solid #8f8b8b;
  background: linear-gradient(#8f8b8b, #8f8b8b) right 17px / 1px 100% no-repeat;
  padding-right: 1px;
  contain: paint;
}

.grid {
  width: 1288px;
  table-layout: fixed;
  border-collapse: separate;
  border-spacing: 0;
  font-family: "Liberation Sans", Arial, sans-serif;
  font-size: 13px;
  line-height: 16px;
}

.col-head {
  width: 26px;
}

.col-a,
.col-b {
  width: 45px;
}

.col-c {
  width: 100px;
}

.col-d {
  width: 128px;
}

.col-e {
  width: 84px;
}

.col-f {
  width: 91px;
}

.col-g {
  width: 77px;
}

.col-h {
  width: 107px;
}

.col-std {
  width: 65px;
}

.grid th,
.grid td {
  height: 17px;
  padding: 0 2px;
  border-right: 1px solid #b8b5b5;
  border-bottom: 1px solid #b8b5b5;
  vertical-align: bottom;
  white-space: nowrap;
}

.grid th {
  padding: 0;
  font-weight: 400;
}

.grid thead th {
  border-bottom-color: #8f8b8b;
  font-size: 14px;
}

.grid tbody th {
  border-right-color: #8f8b8b;
  border-bottom-color: #d0cdcd;
  font-size: 14px;
}

.grid td {
  color: #000;
}

.grid thead .corner {
  background: linear-gradient(135deg, transparent 50%, #c0bcbc 50%) 12px 3px / 10px 10px no-repeat;
}

.grid thead th.selected {
  border-bottom-color: #217346;
  box-shadow: inset 0 -1px #217346;
  background: #cac5c2;
  color: #217346;
}

.grid tbody th.selected {
  border-right-color: #217346;
  box-shadow: inset -1px 0 #217346;
  background: #cac5c2;
  color: #217346;
  font-weight: 700;
}

.row-4 td {
  height: 25px;
}

.row-6 td {
  height: 23px;
}

.grid .list-title {
  font-size: 16px;
  font-weight: 700;
  line-height: 24px;
  text-align: center;
}

.grid .head {
  padding: 0;
  font-weight: 700;
  line-height: 22px;
  text-align: center;
}

.grid .ink {
  border-color: #000;
}

.grid .ink-right {
  border-right-color: #000;
}

.grid .ink-bottom {
  border-bottom-color: #000;
}

.grid .right {
  text-align: right;
}

.grid .yellow {
  border-color: #f5f500;
  background: #f5f500;
  text-align: center;
}

.grid .yellow-right {
  border-right-color: #f5f500;
}

.grid .cursor {
  position: relative;
}

.cursor::before {
  content: "";
  position: absolute;
  inset: -2px;
  border: 2px solid #217346;
}

.cursor::after {
  content: "";
  position: absolute;
  right: -3px;
  bottom: -3px;
  width: 5px;
  height: 5px;
  border: solid #f8f7f7;
  border-width: 1px 0 0 1px;
  background: #217346;
}

.vscroll {
  display: flex;
  flex-direction: column;
  width: 15px;
  margin: 2px 0 0 3px;
}

.scroll-btn {
  display: flex;
  align-items: center;
  justify-content: center;
  width: 15px;
  height: 15px;
  flex: none;
  border: 1px solid #9a9595;
}

.vthumb {
  flex: 1;
  border: 1px solid #9a9595;
}

.vtrack {
  height: 18px;
  background: #e0dddd;
}

.tri-n,
.tri-s,
.tri-w,
.tri-e {
  border: 4px solid transparent;
}

.tri-n {
  border-top: 0;
  border-bottom-color: #666;
}

.tri-s {
  border-bottom: 0;
  border-top-color: #777;
}

.tri-w {
  border-left: 0;
  border-right-color: #777;
}

.tri-e {
  border-right: 0;
  border-left-color: #777;
}

/* sheet tabs */
.sheet-tabs {
  display: flex;
  align-items: center;
  height: 27px;
  flex: none;
  padding-right: 21px;
  background: #e9e6e5;
}

.sheet-nav {
  display: flex;
  gap: 24px;
  width: 100px;
  padding-left: 27px;
  opacity: 0.5;
}

.sheet-tab {
  width: 69px;
  height: 20px;
  padding-bottom: 2px;
  border-right: 1px solid #999;
  font-size: 13px;
}

.sheet-tab.active {
  align-self: flex-start;
  width: 61px;
  height: 24px;
  padding: 0;
  border: solid #999;
  border-width: 0 1px 0 0;
  border-bottom: 2px solid #217346;
  background: #f8f7f7;
  color: #217346;
  font-weight: 700;
}

.new-sheet {
  margin-left: 32px;
}

.sheet-tabs .dots {
  margin-left: auto;
}

.hscroll {
  display: flex;
  width: 38%;
  height: 15px;
  margin-left: 12px;
}

.hthumb {
  flex: 1;
  border: 1px solid #9a9595;
  background: #f8f7f7;
}

.hscroll .scroll-btn {
  background: #f8f7f7;
}

.htrack {
  width: 28px;
  background: #d3cfcd;
}

/* status bar */
.status-bar {
  display: flex;
  align-items: center;
  height: 22px;
  flex: none;
  padding: 0 15px 0 7px;
  background: #20743a;
  color: #fff;
  font-size: 11px;
}

.ready {
  flex: 1;
}

.view-btn {
  display: flex;
  align-items: center;
  justify-content: center;
  width: 38px;
  height: 22px;
}

.view-btn.active {
  background: #0b5527;
}

.zoom {
  width: 12px;
}

.zoom-slider {
  appearance: none;
  width: 100px;
  height: 12px;
  margin: 0 3px;
  background: linear-gradient(#d5ead9, #d5ead9) center / 100% 1px no-repeat;
}

.zoom-slider::-webkit-slider-thumb {
  appearance: none;
  width: 4px;
  height: 12px;
  background: #fff;
}

.zoom-value {
  width: 36px;
  text-align: right;
}

/* windows taskbar */
.taskbar {
  display: flex;
  align-items: stretch;
  gap: 4px;
  height: 40px;
  flex: none;
  padding: 1px 15px 1px 0;
  background: #523425;
  color: #fff;
}

.taskbar button {
  display: flex;
  align-items: center;
  justify-content: center;
}

.start {
  width: 48px;
}

.launch {
  width: 58px;
}

.app {
  width: 58px;
  border: 1px solid #9c8a80;
  background: #7b6155;
}

.app.stacked {
  box-shadow: inset -3px 0 #6b5144, inset -4px 0 #9c8a80;
}

.app.current {
  border-color: #d8cfca;
  background: #a19086;
}

.tray {
  display: flex;
  align-items: center;
  gap: 8px;
  margin-left: auto;
}

.light {
  border-bottom-color: #fff;
  margin-right: 5px;
}

.tray span {
  margin: 0 8px 0 6px;
}

.clock {
  line-height: 17px;
  text-align: center;
}
```
